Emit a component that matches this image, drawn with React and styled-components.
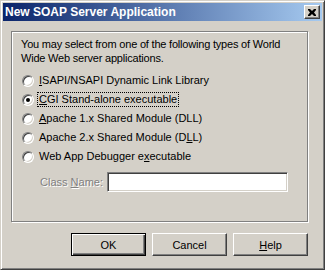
import React from "react";
import styled, { createGlobalStyle } from "styled-components";

const GlobalStyle = createGlobalStyle`
  html, body { margin: 0; padding: 0; background: #d4d0c8; }
  body { font-family: "Liberation Sans", Arial, sans-serif; font-size: 11px; color: #000; }
  * { box-sizing: border-box; }
`;

const options = [
  { label: "ISAPI/NSAPI Dynamic Link Library", key: 0 },
  { label: "CGI Stand-alone executable", key: 0, checked: true },
  { label: "Apache 1.x Shared Module (DLL)", key: 0 },
  { label: "Apache 2.x Shared Module (DLL)", key: 27 },
  { label: "Web App Debugger executable", key: 18 },
];

function Accel({ text, at }) {
  return (
    <>
      {text.slice(0, at)}
      <u>{text[at]}</u>
      {text.slice(at + 1)}
    </>
  );
}

function App() {
  return (
    <>
      <GlobalStyle />
      <Window>
        <TitleBar>
          <TitleText>New SOAP Server Application</TitleText>
          <CloseButton>
            <svg width="8" height="7" viewBox="0 0 8 7">
              <path d="M0 0h2l2 2 2-2h2v1L6 3.5 8 6v1H6L4 5 2 7H0V6l2-2.5L0 1z" fill="#000" />
            </svg>
          </CloseButton>
        </TitleBar>
        <Body>
          <GroupBox>
            <Intro>
              You may select from one of the following types of World
              <br />
              Wide Web server applications.
            </Intro>
            <RadioList>
              {options.map((o) => (
                <RadioRow key={o.label}>
                  <Radio checked={o.checked} />
                  <RadioLabel $focus={o.checked}>
                    <Accel text={o.label} at={o.key} />
                  </RadioLabel>
                </RadioRow>
              ))}
            </RadioList>
            <FieldRow>
              <DisabledLabel>
                <Accel text="Class Name:" at={6} />
              </DisabledLabel>
              <TextBox />
            </FieldRow>
          </GroupBox>
          <ButtonRow>
            <Button $default>OK</Button>
            <Button>Cancel</Button>
            <Button>
              <Accel text="Help" at={0} />
            </Button>
          </ButtonRow>
        </Body>
      </Window>
    </>
  );
}

const Window = styled.div`
  width: 325px;
  height: 270px;
  border: 1px solid;
  border-color: #d4d0c8 #404040 #404040 #d4d0c8;
  box-shadow: inset 1px 1px 0 #fff, inset -1px -1px 0 #808080;
  padding: 2px;
  background: #d4d0c8;
  display: flex;
  flex-direction: column;
`;

const TitleBar = styled.div`
  height: 18px;
  display: flex;
  align-items: center;
  justify-content: space-between;
  padding: 0 2px 0 2px;
  background: linear-gradient(to right, #0a246a, #a6caf0);
`;

const TitleText = styled.span`
  color: #fff;
  font-weight: bold;
  font-size: 12px;
  font-family: "Liberation Sans", Arial, sans-serif;
`;

const CloseButton = styled.div`
  width: 16px;
  height: 14px;
  background: #d4d0c8;
  border: 1px solid;
  border-color: #fff #404040 #404040 #fff;
  box-shadow: inset -1px -1px 0 #808080;
  display: flex;
  align-items: center;
  justify-content: center;
  padding-right: 1px;
`;

const Body = styled.div`
  flex: 1;
  padding: 10px 14px 0 8px;
  display: flex;
  flex-direction: column;
`;

const GroupBox = styled.div`
  height: 191px;
  border: 1px solid #808080;
  box-shadow: 1px 1px 0 #fff, inset 1px 1px 0 #fff;
  padding: 5px 8px 0 9px;
`;

const Intro = styled.div`
  line-height: 14px;
  height: 28px;
  letter-spacing: -0.2px;
`;

const RadioList = styled.div`
  margin-top: 6px;
  display: flex;
  flex-direction: column;
`;

const RadioRow = styled.div`
  height: 19px;
  display: flex;
  align-items: center;
  padding-left: 1px;
`;

const Radio = styled.span`
  width: 12px;
  height: 12px;
  border-radius: 50%;
  border: 1px solid;
  border-color: #808080 #fff #fff #808080;
  background: #fff;
  box-shadow: inset 1px 1px 0 #404040, inset -1px -1px 0 #d4d0c8;
  display: flex;
  align-items: center;
  justify-content: center;
  &::after {
    content: "";
    width: 4px;
    height: 4px;
    border-radius: 50%;
    background: ${(p) => (p.checked ? "#000" : "transparent")};
  }
`;

const RadioLabel = styled.span`
  margin-left: 4px;
  padding: 0 1px;
  line-height: 13px;
  outline: ${(p) => (p.$focus ? "1px dotted #000" : "none")};
`;

const FieldRow = styled.div`
  margin-top: 6px;
  display: flex;
  align-items: center;
  padding-left: 19px;
`;

const DisabledLabel = styled.span`
  color: #808080;
  text-shadow: 1px 1px 0 #fff;
  width: 67px;
`;

const TextBox = styled.div`
  width: 181px;
  height: 20px;
  background: #fff;
  border: 1px solid;
  border-color: #808080 #fff #fff #808080;
  box-shadow: inset 1px 1px 0 #404040, inset -1px -1px 0 #d4d0c8;
`;

const ButtonRow = styled.div`
  margin-top: 11px;
  display: flex;
  justify-content: flex-end;
  gap: 6px;
`;

const Button = styled.div`
  width: 75px;
  height: 23px;
  display: flex;
  align-items: center;
  justify-content: center;
  background: #d4d0c8;
  border: 1px solid;
  border-color: ${(p) => (p.$default ? "#000" : "#fff #404040 #404040 #fff")};
  box-shadow: ${(p) =>
    p.$default
      ? "inset 1px 1px 0 #fff, inset -1px -1px 0 #404040, inset -2px -2px 0 #808080"
      : "inset -1px -1px 0 #808080"};
`;

export default App;
